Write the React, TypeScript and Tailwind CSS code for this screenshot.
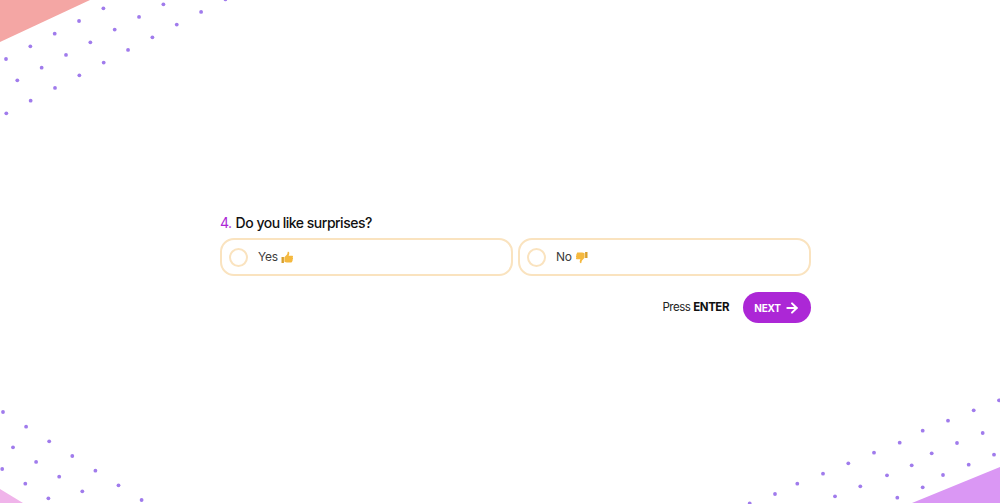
import { ArrowRight } from "lucide-react";

const topLeftDots: number[][] = [];
for (let i = 0; i < 5; i++) topLeftDots.push([6 + i * 24.35, 59 - i * 12.67]);
for (let i = 0; i < 7; i++) topLeftDots.push([17.3 + i * 24.35, 80.3 - i * 12.67]);
for (let i = 0; i < 10; i++) topLeftDots.push([6.3 + i * 24.35, 113.3 - i * 12.67]);

const bottomLeftDots: number[][] = [];
for (let i = 0; i < 7; i++) bottomLeftDots.push([3 + i * 23.1, 412 + i * 14.67]);
for (let i = 0; i < 4; i++) bottomLeftDots.push([13 + i * 23.1, 447.3 + i * 14.67]);
for (let i = 0; i < 3; i++) bottomLeftDots.push([2.2 + i * 23.1, 469 + i * 14.67]);

const bottomRightDots = [
  [749.7, 503.3], [775, 494], [797.3, 483.7], [823, 473.7], [848.3, 463.3], [874, 452.7],
  [899.7, 442.7], [922.7, 430.7], [948, 420.7], [973.7, 410.3], [999, 400.3],
  [835, 496.3], [860.3, 486.3], [887, 475.3], [911.7, 465.3], [931.7, 453.3], [957, 443], [982.7, 433],
  [897.3, 497.7], [922.7, 487.3], [943, 475], [968.7, 464.7], [994, 454.7],
];

function Dots() {
  return (
    <svg className="absolute inset-0 pointer-events-none" width="1000" height="504" viewBox="0 0 1000 504">
      <polygon points="0,0 90,0 0,42" fill="#f4a6a4" />
      <polygon points="0,489 23,503 0,503" fill="#f0b4ea" />
      <polygon points="912,503 1000,467 1000,503" fill="#da97f4" />
      {[...topLeftDots, ...bottomLeftDots, ...bottomRightDots].map(([x, y], i) => (
        <circle key={i} cx={x} cy={y} r="1.9" fill="#a07bec" />
      ))}
    </svg>
  );
}

function Thumb({ down }: { down?: boolean }) {
  return (
    <svg width="13" height="13" viewBox="0 0 13 13" className={down ? "rotate-180" : ""}>
      <path d="M0.5 6h2.4v6H0.5z" fill="#d9a02c" />
      <path
        d="M3.4 6.2 6 3.4c.4-.5.5-1.4.6-2.2.1-.7 1.7-.5 1.7 1 0 1-.4 1.9-.7 2.6h3.4c1.2 0 1.4 1.5.5 1.8.8.4.7 1.5 0 1.8.5.5.3 1.4-.3 1.6.2.7-.2 1.4-1 1.4H6c-1 0-1.7-.3-2.6-.7z"
        fill="#f5b93f"
      />
    </svg>
  );
}

function Option({ label, down }: { label: string; down?: boolean }) {
  return (
    <div className="flex-1 h-[38px] flex items-center pl-[7px] rounded-[14px] border-2 border-[#fae3bf] bg-white">
      <span className="w-[19px] h-[19px] rounded-full border-2 border-[#fae3bf]" />
      <span className="ml-[10px] text-[12px] tracking-[-0.2px] leading-[20px] text-[#3c3c3c] flex items-center gap-[3px]">
        {label}
        <Thumb down={down} />
      </span>
    </div>
  );
}

export default function App() {
  return (
    <div className="relative w-full h-screen overflow-hidden bg-white font-['Inter',sans-serif]">
      <Dots />
      <div className="relative w-[591px] ml-[220px] pt-[213px]">
        <h2 className="h-[19px] flex items-center gap-[4px] text-[14px] tracking-[-0.5px] leading-[19px] font-medium text-[#111111]">
          <span className="text-[#ac27d6] font-normal">4.</span>
          Do you like surprises?
        </h2>
        <div className="mt-[6px] flex gap-[5px]">
          <Option label="Yes" />
          <Option label="No" down />
        </div>
        <div className="mt-[16px] flex items-center justify-end gap-[14px]">
          <span className="text-[11.5px] tracking-[-0.45px] text-[#222222]">
            Press <b className="font-bold text-[#111111]">ENTER</b>
          </span>
          <button className="h-[31px] w-[68px] rounded-full bg-[#ac27d6] text-white text-[10px] tracking-[-0.2px] font-bold flex items-center justify-center gap-[3px]">
            <span className="pt-[1px]">NEXT</span>
            <ArrowRight size={16} strokeWidth={3} />
          </button>
        </div>
      </div>
    </div>
  );
}
